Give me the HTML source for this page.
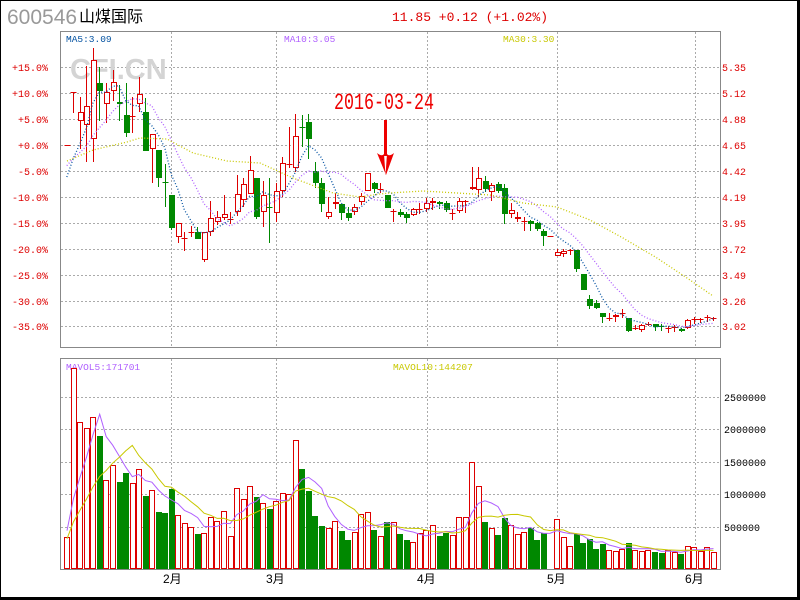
<!DOCTYPE html>
<html><head><meta charset="utf-8">
<style>
html,body{margin:0;padding:0;background:#fff;}
svg{display:block;}
</style></head>
<body>
<svg id="s" width="800" height="600" xmlns="http://www.w3.org/2000/svg" font-family="Liberation Mono, monospace">
<rect x="0.5" y="0.5" width="797" height="597" fill="#fff" stroke="#000" stroke-width="1"/>
<rect x="797" y="0" width="3" height="600" fill="#000"/>
<rect x="0" y="597" width="800" height="3" fill="#000"/>
<text x="7" y="24" font-family="Liberation Sans, sans-serif" font-size="21" fill="#999">600546</text>
<text x="79" y="22" font-family="Liberation Sans, 'Noto Sans CJK SC', sans-serif" font-size="16" fill="#000">山煤国际</text>
<text x="392" y="21" font-size="13" fill="#dd0000">11.85 +0.12 (+1.02%)</text>
<g id="grid" stroke="#aaa" stroke-width="1" stroke-dasharray="2,2"></g>
<text x="70" y="79" font-family="Liberation Sans, sans-serif" font-weight="bold" font-size="29" fill="#d4d4d4">CFI.CN</text>
<rect x="60.5" y="31.5" width="660" height="316" fill="none" stroke="#888"/>
<rect x="60.5" y="358.5" width="660" height="211" fill="none" stroke="#888"/>
<g id="lab" font-size="10"></g>
<text x="66" y="42" font-size="9.5" fill="#0050a0">MA5:3.09</text>
<text x="284" y="42" font-size="9.5" fill="#b060ff">MA10:3.05</text>
<text x="503" y="42" font-size="9.5" fill="#c8c800">MA30:3.30</text>
<text x="66" y="370" font-size="9.5" fill="#b060ff">MAVOL5:171701</text>
<text x="393" y="370" font-size="9.5" fill="#c8c800">MAVOL10:144207</text>
<g id="vol"></g>
<g id="cnd"></g>
<g id="ma" fill="none"></g>
<text x="0" y="0" font-size="17" fill="#ee0000" transform="translate(334,109) scale(0.98,1.35)">2016-03-24</text>
<rect x="384" y="120" width="3" height="36" fill="#ee0000"/>
<path d="M377,153 Q382,157 384,154 L385.5,175 L387,154 Q389,157 394,153 L386,175 Z" fill="#ee0000"/>
</svg>
<script>
var NS="http://www.w3.org/2000/svg";
function el(p,t,a){var e=document.createElementNS(NS,t);for(var k in a)e.setAttribute(k,a[k]);p.appendChild(e);return e;}
var g=document.getElementById('grid');
[171,276,427,557,695].forEach(function(x){el(g,'line',{x1:x+.5,y1:32,x2:x+.5,y2:347});el(g,'line',{x1:x+.5,y1:359,x2:x+.5,y2:569});});
var hy=[67,93,119,145,171,197,223,249,275,301,326];
hy.forEach(function(y){el(g,'line',{x1:61,y1:y+.5,x2:720,y2:y+.5});});
[397,429,462,494,527].forEach(function(y){el(g,'line',{x1:61,y1:y+.5,x2:720,y2:y+.5});});
var lab=document.getElementById('lab');
var L=['+15.0%','+10.0%','+5.0%','+0.0%','-5.0%','-10.0%','-15.0%','-20.0%','-25.0%','-30.0%','-35.0%'];
var R=['5.35','5.12','4.88','4.65','4.42','4.19','3.95','3.72','3.49','3.26','3.02'];
hy.forEach(function(y,i){var t=el(lab,'text',{x:48,y:y+4,'text-anchor':'end',fill:'#dd0000'});t.textContent=L[i];
 t=el(lab,'text',{x:722,y:y+4,fill:'#dd0000'});t.textContent=R[i];});
['2500000','2000000','1500000','1000000','500000'].forEach(function(s,i){var y=[397,429,462,494,527][i];var t=el(lab,'text',{x:724,y:y+4,fill:'#000'});t.textContent=s;});
[['2月',163],['3月',266],['4月',417],['5月',547],['6月',685]].forEach(function(m){var t=el(lab,'text',{x:m[1],y:583,fill:'#000','font-size':12,'font-family':"Liberation Sans, 'Noto Sans CJK SC', sans-serif"});t.textContent=m[0];});
// candles: [c, top, bot, hi, lo] c:1 red 0 green
var C=[[1,145,145,145,145],[1,92,92,92,113],[1,112,121,97,149],[1,106,125,66,162],[1,60,139,48,162],[0,83,91,67,121],[1,92,104,83,123],[1,82,91,70,101],[0,102,104,85,121],[0,115,133,83,137],
[1,116,116,97,133],[1,94,104,77,112],[0,112,151,98,151],[1,134,149,134,183],[0,150,178,150,187],[0,182,182,164,207],[0,195,228,195,230],[1,223,237,223,243],[1,238,238,232,251],[1,232,232,226,237],
[0,232,239,227,239],[1,232,260,232,262],[1,218,232,201,236],[1,217,222,211,225],[1,214,218,195,220],[1,219,219,212,224],[1,194,212,175,216],[1,184,200,178,207],[1,170,194,156,194],[0,178,217,178,219],
[1,195,212,181,227],[0,207,207,178,243],[1,191,213,183,222],[1,163,191,157,197],[1,164,164,127,168],[1,136,168,114,172],[0,127,127,115,147],[0,122,139,114,159],[0,171,183,162,188],[0,183,204,178,212],
[1,212,217,197,219],[1,202,204,193,209],[0,204,213,204,220],[0,213,218,207,221],[1,207,212,204,215],[1,196,202,193,205],[1,173,191,173,191],[0,183,189,182,193],[1,189,189,183,193],[0,195,208,195,208],
[1,211,211,209,222],[0,212,215,209,217],[0,214,218,212,223],[1,209,215,208,216],[1,209,209,203,214],[1,203,209,198,212],[1,201,203,198,210],[0,202,204,201,209],[0,203,210,201,212],[1,213,213,209,220],
[1,201,211,198,213],[1,201,201,200,213],[1,187,189,167,190],[1,178,190,167,197],[0,181,189,176,192],[1,185,192,183,201],[0,184,191,182,193],[0,188,214,184,224],[1,210,214,203,218],[1,217,219,212,222],
[1,221,221,217,231],[0,221,224,220,231],[0,223,229,222,231],[0,231,236,229,246],[1,236,236,236,236],[1,252,256,249,256],[1,251,254,249,257],[1,250,250,249,255],[0,250,269,250,272],[0,274,290,274,290],
[0,299,306,295,309],[0,303,308,300,309],[0,313,317,313,323],[1,318,318,313,321],[1,315,317,314,322],[1,313,313,309,318],[0,318,331,318,332],[1,328,328,325,330],[1,325,330,324,332],[1,324,324,322,326],
[0,324,327,324,331],[0,326,327,324,331],[1,328,328,326,333],[1,327,327,325,332],[0,329,331,328,332],[1,320,328,319,329],[1,319,319,317,324],[1,319,319,318,323],[1,317,317,315,322],[1,318,318,317,321]];
var cg=document.getElementById('cnd');
var closes=[];
C.forEach(function(d,i){var cx=Math.round(66.8+6.53*i);var col=d[0]?'#dd0000':'#008800';
 var t=d[1],b=d[2];closes.push(d[0]?t:b);
 if(b-t<1.5){el(cg,'line',{x1:cx+.5,y1:d[3],x2:cx+.5,y2:d[4],stroke:col});el(cg,'line',{x1:cx-2.5,y1:t+.5,x2:cx+3.5,y2:t+.5,stroke:col});return;}
 if(d[0]){if(d[3]<t)el(cg,'line',{x1:cx+.5,y1:d[3],x2:cx+.5,y2:t,stroke:col});if(d[4]>b)el(cg,'line',{x1:cx+.5,y1:b,x2:cx+.5,y2:d[4],stroke:col});
  el(cg,'rect',{x:cx-2+.5,y:t+.5,width:5,height:b-t-1,fill:'#fff',stroke:col});}
 else{el(cg,'line',{x1:cx+.5,y1:d[3],x2:cx+.5,y2:d[4],stroke:col});el(cg,'rect',{x:cx-2,y:t,width:6,height:b-t,fill:col});}
});
// volumes: [top,c]
var V=[[537,1],[368,1],[422,1],[428,1],[417,1],[436,0],[480,1],[465,1],[482,0],[473,0],[483,1],[469,1],[496,0],[490,1],[512,0],[513,0],[489,0],[515,1],[523,1],[527,1],
[534,0],[533,1],[517,1],[521,1],[511,1],[536,1],[488,1],[499,1],[486,1],[497,0],[503,1],[509,0],[501,1],[493,1],[494,1],[440,1],[469,0],[491,0],[516,0],[526,0],
[528,1],[521,1],[531,0],[540,0],[532,1],[514,1],[512,1],[530,0],[536,1],[522,0],[522,1],[534,0],[540,0],[542,1],[533,1],[530,1],[525,1],[536,0],[533,0],[535,1],
[517,1],[517,1],[462,1],[486,1],[522,0],[528,1],[535,0],[518,0],[525,1],[534,1],[532,1],[528,0],[540,0],[533,0],null,[519,1],[537,1],[546,1],[534,0],[543,0],
[539,0],[549,0],[544,0],[550,1],[551,1],[549,1],[543,0],[550,1],[551,1],[550,1],[552,0],[553,0],[550,1],[552,1],[554,0],[546,1],[547,1],[551,1],[547,1],[552,1]];
var vg=document.getElementById('vol');var vs=[];
V.forEach(function(d,i){var x=Math.round(64.3+6.53*i);if(!d){vs.push(null);return;}vs.push(569-d[0]);
 if(d[1])el(vg,'rect',{x:x+.5,y:d[0]+.5,width:5,height:569-d[0]-1,fill:'#fff',stroke:'#dd0000'});
 else el(vg,'rect',{x:x,y:d[0],width:6,height:569-d[0],fill:'#008800'});});
var mg=document.getElementById('ma');
function ma(arr,n,pad){var a=[];for(var i=0;i<n;i++)a.push(pad);a=a.concat(arr);var r=[];
 for(var i=0;i<arr.length;i++){var s=0,c=0;for(var j=i+n;j>i;j--){var v=a[j];if(v==null)v=a[j-1]||pad;s+=v;c++;}r.push(s/c);}return r;}
function poly(vals,f,attrs){var p=vals.map(function(v,i){return f(i).toFixed(1)+','+v.toFixed(1);}).join(' ');attrs.points=p;el(mg,'polyline',attrs);}
var m5=ma(closes,5,185),m10=ma(closes,10,168);
poly(m5,function(i){return 66.8+6.53*i;},{stroke:'#0050a0','stroke-dasharray':'1,2','stroke-width':1.3});
poly(m10,function(i){return 66.8+6.53*i;},{stroke:'#b060ff','stroke-dasharray':'1,2','stroke-width':1.3});
el(mg,'polyline',{points:'67,161 93,150 127,142 140,138 167,139 193,153 227,161 260,163 293,178 333,193 360,197 380,194 390,193 423,191 457,193 490,195 523,203 557,207 590,220 623,238 657,258 690,280 713,296',stroke:'#c8c800','stroke-dasharray':'1,2','stroke-width':1.3});
var v5=ma(vs,5,40),v10=ma(vs,10,30);
poly(v5.map(function(v){return 569-v;}),function(i){return 67+6.53*i;},{stroke:'#b060ff','stroke-width':1});
poly(v10.map(function(v){return 569-v;}),function(i){return 67+6.53*i;},{stroke:'#c8c800','stroke-width':1});
</script>
</body></html>
